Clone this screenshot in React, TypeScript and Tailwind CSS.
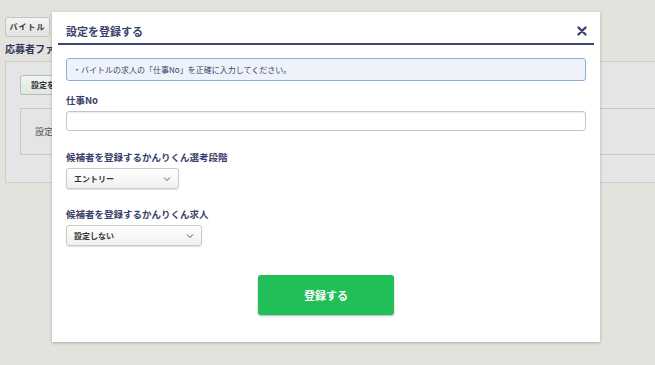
import React from "react";

const font = { fontFamily: '"Noto Sans CJK JP", "Noto Sans", sans-serif' };

function Chevron() {
  return (
    <svg width="8" height="6" viewBox="0 0 8 6" fill="none" className="text-[#555]">
      <path d="M1 1.5 L4 4.5 L7 1.5" stroke="currentColor" strokeWidth="1" />
    </svg>
  );
}

function SelectBox({ label, width }: { label: string; width: string }) {
  return (
    <div
      className={`${width} h-[21px] flex items-center justify-between pl-[7px] pr-[7px] rounded-[3px] border border-[#c9c9c9] bg-gradient-to-b from-white to-[#f0f0f0] shadow-[0_1px_1px_rgba(0,0,0,0.12)]`}
    >
      <span className="text-[8px] font-bold text-[#333]">{label}</span>
      <Chevron />
    </div>
  );
}

export default function App() {
  return (
    <div className="relative w-[655px] h-[365px] overflow-hidden bg-[#e3e2dc]" style={font}>
      {/* page behind the modal */}
      <div className="pt-[17px] pl-[5px]">
        <div className="w-[45px] h-[20px] flex items-center justify-center rounded-[3px] border border-[#c4c4c4] bg-gradient-to-b from-[#f4f4f4] to-[#e2e2e2]">
          <span className="text-[8px] font-bold text-[#333] tracking-[1px]">バイトル</span>
        </div>
        <div className="mt-[5px] h-[14px] text-[10px] font-bold text-[#2f3560] leading-[14px]">
          応募者ファイル
        </div>
        <div className="mt-[5px] h-[122px] border border-[#cdcdcd] bg-[#e5e5e5] pt-[13px] pl-[14px] -mr-[10px]">
          <div className="w-[60px] h-[20px] flex items-center pl-[10px] rounded-[3px] border border-[#a9c4bd] bg-gradient-to-b from-[#f1f4f2] to-[#e1e6e3]">
            <span className="text-[8px] font-bold text-[#333]">設定を</span>
          </div>
          <div className="mt-[13px] h-[47px] border border-[#c9c9c9] flex items-center pl-[14px] -mr-[10px]">
            <span className="text-[9px] text-[#555]">設定</span>
          </div>
        </div>
      </div>

      {/* modal */}
      <div className="absolute left-[52px] top-[12px] w-[548px] h-[330px] bg-white shadow-[0_1px_3px_rgba(0,0,0,0.25)] px-[6px]">
        <div className="h-[33px] flex items-end justify-between border-b-2 border-[#3d4374] pb-[6px] pl-[8px] pr-[7px]">
          <span className="text-[11px] font-bold text-[#3a3f6b] leading-none">設定を登録する</span>
          <svg width="10" height="10" viewBox="0 0 10 10" className="mb-[1px]">
            <path d="M1.5 1.5 L8.5 8.5 M8.5 1.5 L1.5 8.5" stroke="#3d4374" strokeWidth="2.4" strokeLinecap="round" />
          </svg>
        </div>

        <div className="px-[8px]">
          <div className="mt-[13px] h-[23px] flex items-center pl-[6px] rounded-[3px] border border-[#8eaedd] bg-[#eef3fb]">
            <span className="text-[8px] text-[#3a3f6b]">・バイトルの求人の「仕事No」を正確に入力してください。</span>
          </div>

          <div className="mt-[12px] text-[9.5px] font-bold text-[#3a3f6b] leading-[14px]">仕事No</div>
          <div className="mt-[4px] h-[20px] rounded-[3px] border border-[#c6c6c6] shadow-[inset_0_1px_1px_rgba(0,0,0,0.08)]" />

          <div className="mt-[19px] text-[9.5px] font-bold text-[#3a3f6b] leading-[14px]">
            候補者を登録するかんりくん選考段階
          </div>
          <div className="mt-[4px]">
            <SelectBox label="エントリー" width="w-[113px]" />
          </div>

          <div className="mt-[18px] text-[9.5px] font-bold text-[#3a3f6b] leading-[14px]">
            候補者を登録するかんりくん求人
          </div>
          <div className="mt-[4px]">
            <SelectBox label="設定しない" width="w-[136px]" />
          </div>

          <div className="mt-[29px] flex justify-center">
            <button className="w-[136px] h-[40px] rounded-[3px] bg-[#22bf58] shadow-[0_1px_2px_rgba(0,0,0,0.3)] text-white text-[11px] font-bold">
              登録する
            </button>
          </div>
        </div>
      </div>
    </div>
  );
}
